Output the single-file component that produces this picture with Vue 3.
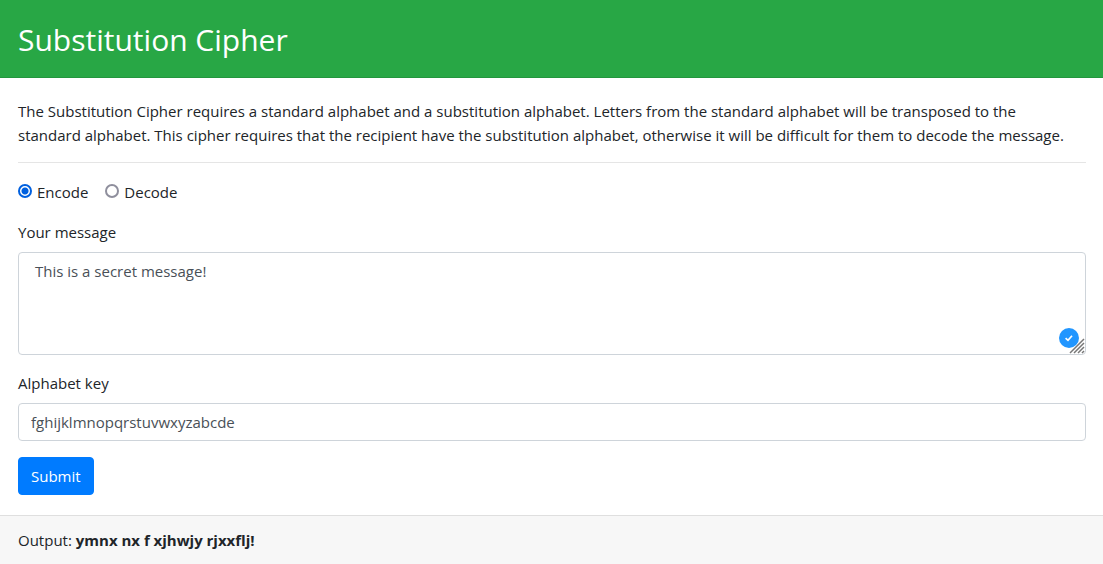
<script setup>
import { ref } from 'vue'

const mode = ref('encode')
const message = ref('This is a secret message!')
const alphabet = ref('fghijklmnopqrstuvwxyzabcde')
const output = ref('ymnx nx f xjhwjy rjxxflj!')
</script>

<template>
  <main class="card">
    <header class="card-header">
      <h1>Substitution Cipher</h1>
    </header>
    <form class="card-body" @submit.prevent>
      <p class="intro">
        The Substitution Cipher requires a standard alphabet and a substitution alphabet. Letters from the standard
        alphabet will be transposed to the standard alphabet. This cipher requires that the recipient have the
        substitution alphabet, otherwise it will be difficult for them to decode the message.
      </p>
      <hr />
      <div class="modes">
        <label class="mode"><input v-model="mode" type="radio" name="mode" value="encode" />Encode</label>
        <label class="mode"><input v-model="mode" type="radio" name="mode" value="decode" />Decode</label>
      </div>
      <div class="group">
        <label for="message">Your message</label>
        <div class="message-box">
          <textarea id="message" v-model="message" class="control message" spellcheck="false"></textarea>
          <svg class="check" viewBox="0 0 20 20" aria-hidden="true">
            <circle cx="10" cy="10" r="10" fill="#2196ff" />
            <path d="M6.6 10.2 9 12.4 13 7.8" fill="none" stroke="#fff" stroke-width="1.7" />
          </svg>
          <svg class="grip" viewBox="0 0 16 16" aria-hidden="true">
            <path d="M1 15 15 1M5 15 15 5M9 15 15 9M13 15 15 13" fill="none" stroke="#777" stroke-width="1.5" />
          </svg>
        </div>
      </div>
      <div class="group">
        <label for="alphabet">Alphabet key</label>
        <input id="alphabet" v-model="alphabet" class="control" type="text" spellcheck="false" />
      </div>
      <button type="submit" class="submit">Submit</button>
    </form>
    <footer class="card-footer">Output: <strong>{{ output }}</strong></footer>
  </main>
</template>

<style>
body {
  margin: 0;
  background: #f7f7f7;
}
</style>

<style scoped>
* {
  box-sizing: border-box;
}
.card {
  background: #fff;
  font: 15px/24px "Open Sans", "Noto Sans", sans-serif;
  color: #212529;
}
.card-header {
  padding: 21px 18px 18px;
  background: #28a745;
  border-bottom: 1px solid #23963e;
  color: #fff;
}
h1 {
  margin: 0;
  font-size: 30px;
  line-height: 38px;
  font-weight: 400;
}
.card-body {
  padding: 21px 17px 20px 18px;
}
.intro {
  margin: 0 0 15px;
  padding-right: 8px;
}
hr {
  margin: 0 0 17px;
  border: 0;
  border-top: 1px solid #e5e5e5;
}
.modes {
  display: flex;
  gap: 17px;
  margin-bottom: 16px;
}
.mode {
  display: flex;
  align-items: center;
  gap: 5px;
}
.mode input {
  appearance: none;
  width: 14px;
  height: 14px;
  margin: 0 0 2px;
  border: 2px solid #8f8f9d;
  border-radius: 50%;
  background: #fff;
}
.mode input:checked {
  border-color: #0060df;
  background: radial-gradient(circle, #0060df 3px, #fff 4px);
}
.group {
  display: flex;
  flex-direction: column;
  gap: 8px;
  margin-bottom: 16px;
}
.control {
  display: block;
  width: 100%;
  padding: 6px 12px;
  border: 1px solid #ced4da;
  border-radius: 4px;
  background: #fff;
  color: #495057;
  font: inherit;
  outline: 0;
}
.message-box {
  position: relative;
}
.message {
  height: 103px;
  padding: 6px 16px;
  resize: none;
}
.check {
  position: absolute;
  right: 7px;
  bottom: 7px;
  width: 20px;
  height: 20px;
}
.grip {
  position: absolute;
  right: 1px;
  bottom: 1px;
  width: 16px;
  height: 16px;
}
.submit {
  display: block;
  padding: 6px 12px;
  border: 1px solid #007bff;
  border-radius: 4px;
  background: #007bff;
  color: #fff;
  font: inherit;
}
.card-footer {
  padding: 12px 18px;
  border-top: 1px solid #dfdfdf;
  background: #f7f7f7;
}
</style>
